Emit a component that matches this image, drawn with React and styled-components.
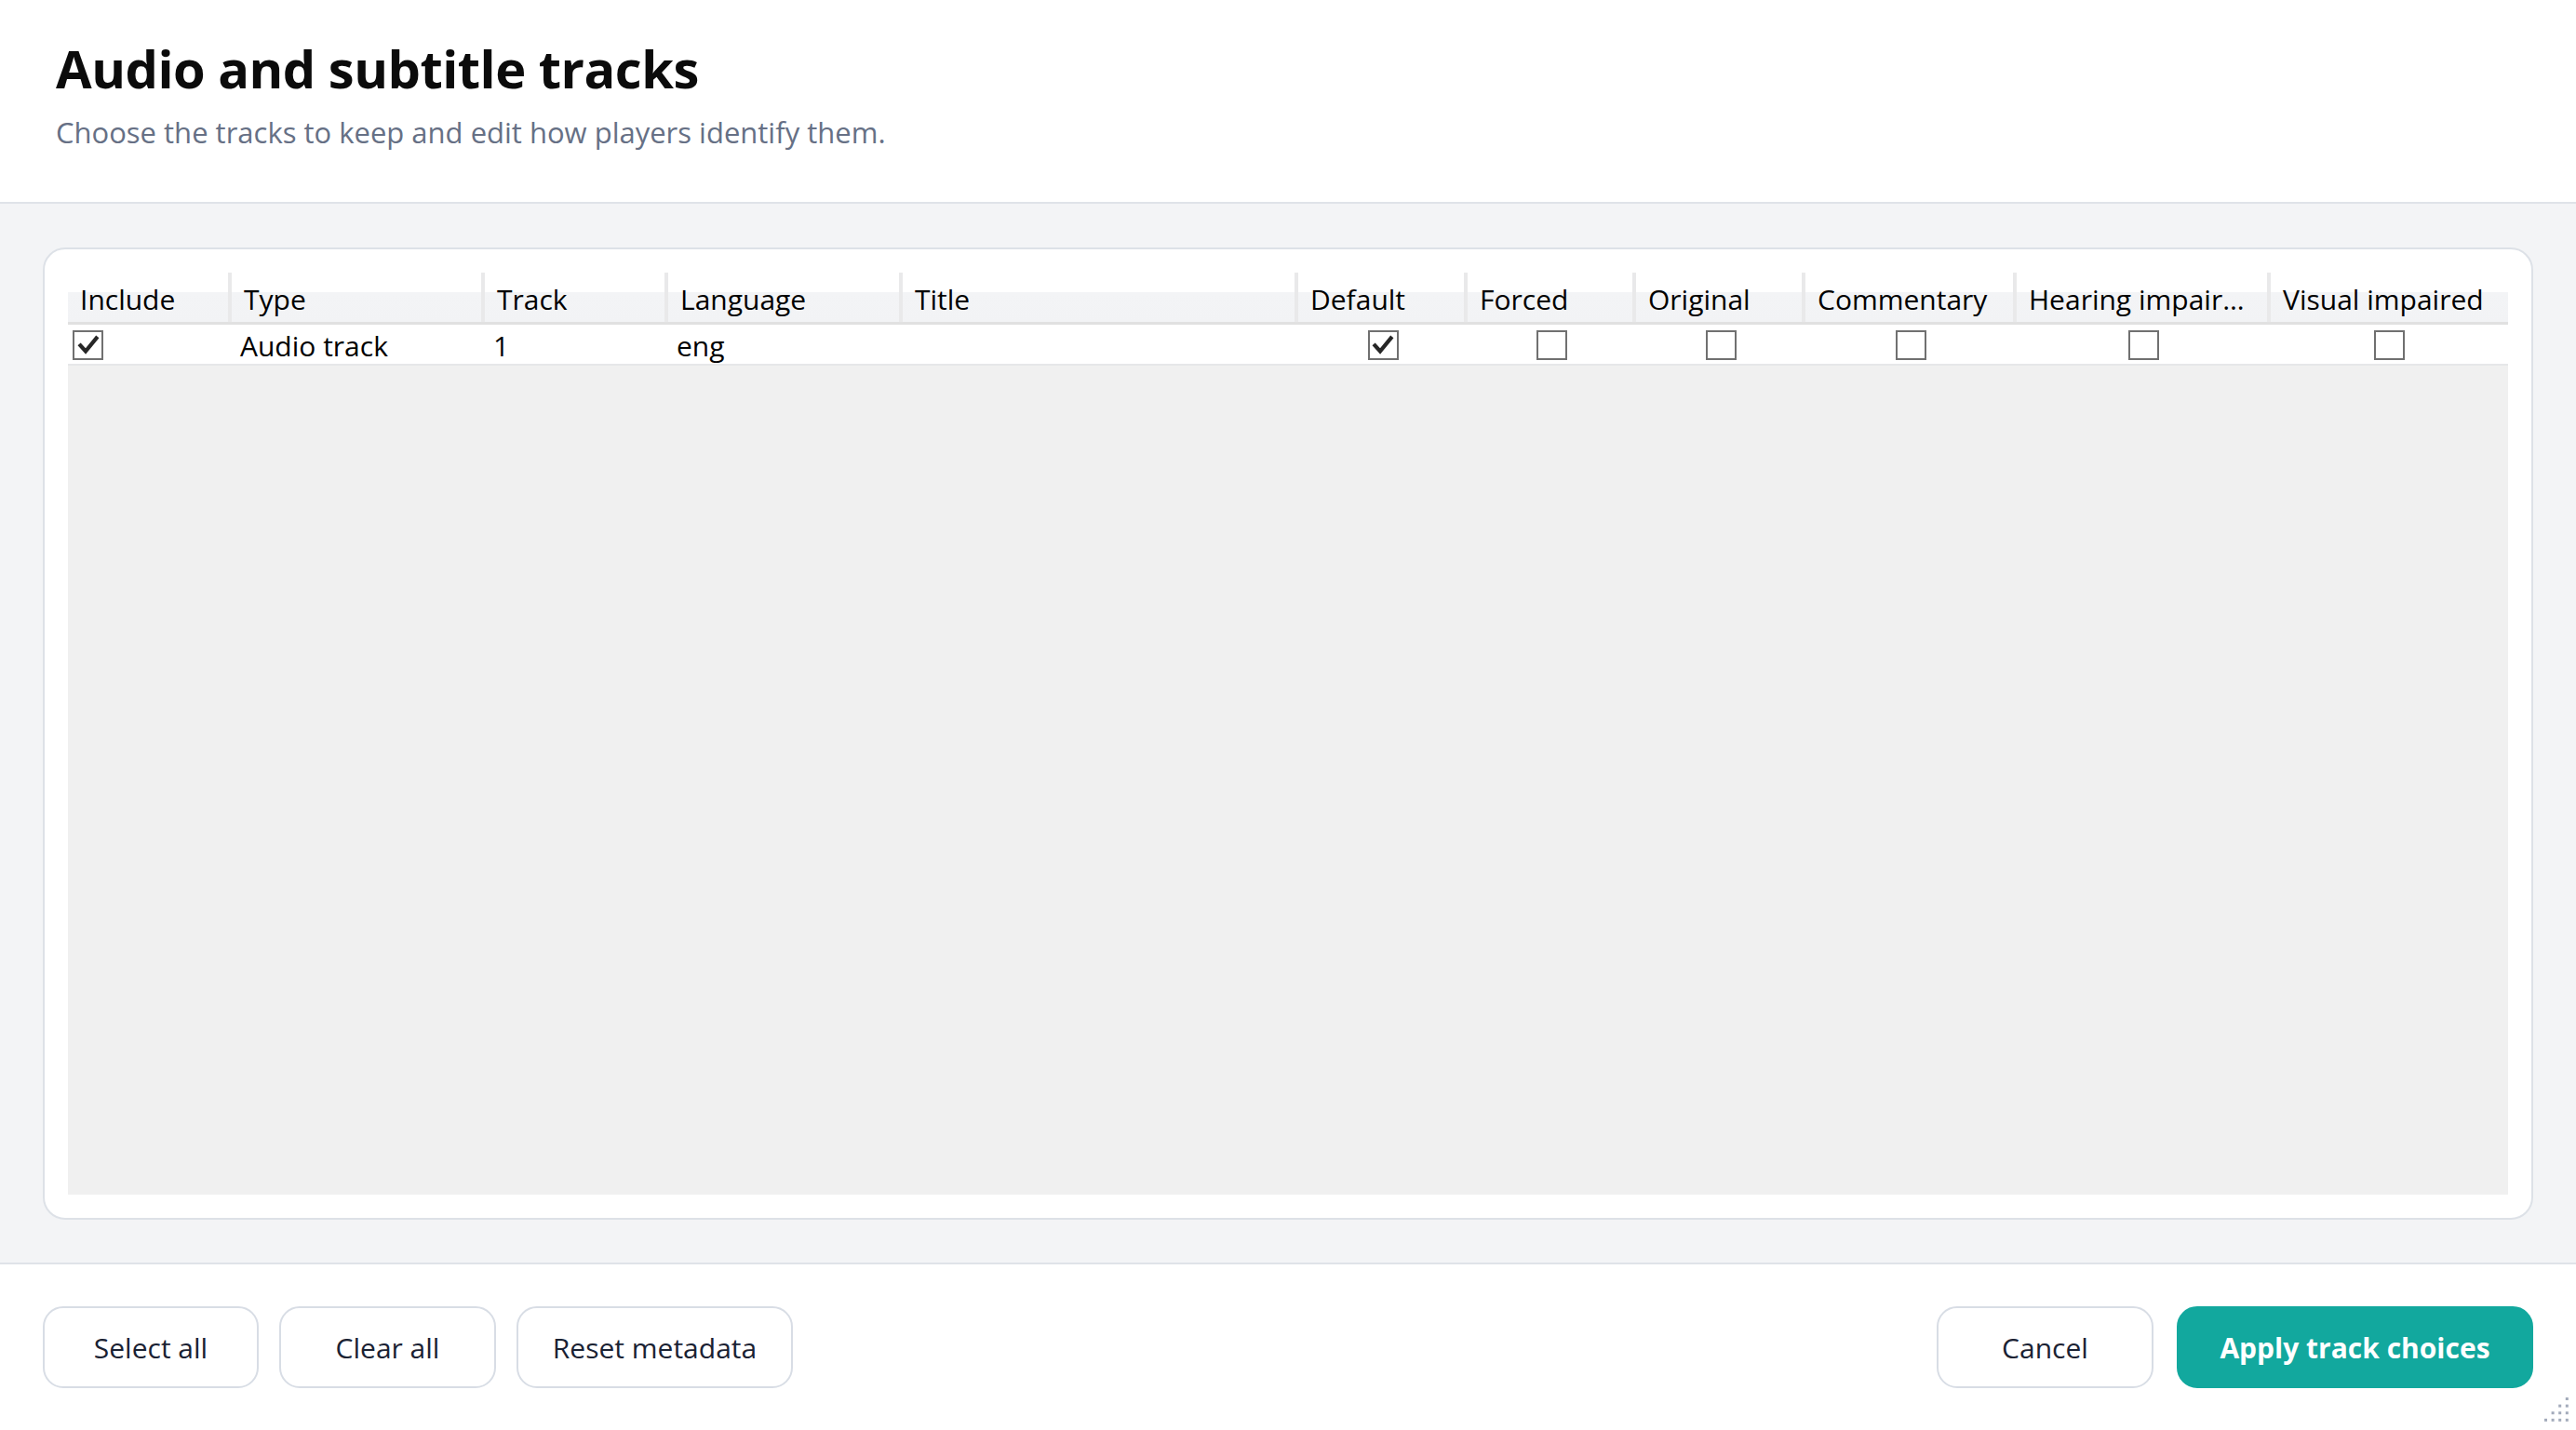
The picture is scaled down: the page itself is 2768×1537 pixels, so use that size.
import styled, { createGlobalStyle } from "styled-components";

const GlobalStyle = createGlobalStyle`
    html, body {
        margin: 0;
        padding: 0;
        background: #fff;
    }
    body {
        font-family: "Open Sans", "Noto Sans", sans-serif;
        color: #000;
    }
    * {
        box-sizing: border-box;
    }
`

const Page = styled.div`
    position: relative;
    height: 100vh;
    display: flex;
    flex-direction: column;
    overflow: hidden;
`

const Header = styled.div`
    height: 219px;
    flex-shrink: 0;
    padding: 35px 60px 0;
    border-bottom: 2px solid #dfe3e8;
    background: #fff;
`

const Title = styled.h1`
    margin: 0;
    font-size: 56px;
    line-height: 76px;
    font-weight: 700;
    color: #0b0b0b;
    letter-spacing: -0.5px;
`

const Subtitle = styled.p`
    margin: 11px 0 0;
    font-size: 31px;
    line-height: 40px;
    color: #667085;
`

const Content = styled.div`
    flex: 1;
    display: flex;
    padding: 47px 46px 46px;
    background: #f3f4f6;
    min-height: 0;
`

const Card = styled.div`
    flex: 1;
    display: flex;
    padding: 25px;
    background: #fff;
    border: 2px solid #dde1e7;
    border-radius: 24px;
`

const TableView = styled.div`
    flex: 1;
    display: flex;
    flex-direction: column;
    background: #f0f0f0;
`

const cols = "176px 272px 197px 252px 425px 182px 181px 182px 227px 273px 255px";

const HeaderRow = styled.div`
    display: grid;
    grid-template-columns: ${cols};
    height: 56px;
    background: linear-gradient(180deg, #fff 0%, #fff 40%, #f3f4f6 40%, #f2f3f5 100%);
    border-bottom: 3px solid #e1e1e1;
`

const HeaderCell = styled.div`
    display: flex;
    align-items: center;
    padding: 3px 0 0 13px;
    font-size: 30px;
    color: #000;
    white-space: nowrap;
    overflow: hidden;
    border-right: ${p => p.$last ? "none" : "4px solid #e9e9ea"};
`

const Row = styled.div`
    display: grid;
    grid-template-columns: ${cols};
    height: 44px;
    background: #fff;
    border-bottom: 2px solid #e6e7e9;
`

const Cell = styled.div`
    display: flex;
    align-items: center;
    justify-content: ${p => p.$center ? "center" : "flex-start"};
    padding: ${p => p.$center ? "0" : "2px 0 0 9px"};
    font-size: 30px;
    color: #000;
    white-space: nowrap;
`

const BoxCell = styled(Cell)`
    padding: 0 0 0 5px;
`

const Check = styled.div`
    width: 33px;
    height: 32px;
    border: 2px solid #707070;
    background: #fff;
    display: flex;
    align-items: center;
    justify-content: center;
    svg {
        display: block;
    }
`

const Footer = styled.div`
    height: 180px;
    flex-shrink: 0;
    display: flex;
    align-items: flex-start;
    justify-content: space-between;
    padding: 45px 46px 0;
    background: #fff;
    border-top: 2px solid #dfe3e8;
`

const BtnGroup = styled.div`
    display: flex;
    gap: ${p => p.$gap || 22}px;
`

const Btn = styled.div`
    height: 88px;
    width: ${p => p.$w}px;
    display: flex;
    align-items: center;
    justify-content: center;
    border-radius: 22px;
    border: 2px solid ${p => p.$primary ? "#12a89e" : "#d8dde5"};
    background: ${p => p.$primary ? "#12a89e" : "#fff"};
    color: ${p => p.$primary ? "#fff" : "#1a2233"};
    font-size: 30px;
    font-weight: ${p => p.$primary ? 700 : 400};
    cursor: pointer;
`

const Grip = styled.div`
    position: absolute;
    right: 4px;
    bottom: 5px;
    width: 30px;
    height: 30px;
`

const columns = ["Include", "Type", "Track", "Language", "Title", "Default", "Forced", "Original", "Commentary", "Hearing impair…", "Visual impaired"];

const track = {type: "Audio track", num: "1", lang: "eng", title: "", flags: [true, false, false, false, false, false]};

function CheckBox({checked}) {
    return <Check>
        {checked && <svg width="24" height="24" viewBox="0 0 24 24">
            <path d="M3.5 12.5 L9 18.5 L20.5 4.5" fill="none" stroke="#262626" strokeWidth="4.2" strokeLinecap="square" strokeLinejoin="miter"/>
        </svg>}
    </Check>
}

function ResizeGrip() {
    const dots = [];
    for (let r = 0; r < 4; r++) {
        for (let c = 3 - r; c < 4; c++) {
            dots.push(<rect key={r + "-" + c} x={c * 7.6} y={r * 7.6} width="3" height="3" fill="#a3abbb"/>);
        }
    }
    return <Grip>
        <svg width="30" height="30" viewBox="0 0 30 30">{dots}</svg>
    </Grip>
}

export default function App() {
    return <Page>
        <GlobalStyle/>
        <Header>
            <Title>Audio and subtitle tracks</Title>
            <Subtitle>Choose the tracks to keep and edit how players identify them.</Subtitle>
        </Header>
        <Content>
            <Card>
                <TableView>
                    <HeaderRow>
                        {columns.map((c, i) => <HeaderCell key={c} $last={i === columns.length - 1}>{c}</HeaderCell>)}
                    </HeaderRow>
                    <Row>
                        <BoxCell><CheckBox checked={true}/></BoxCell>
                        <Cell>{track.type}</Cell>
                        <Cell>{track.num}</Cell>
                        <Cell>{track.lang}</Cell>
                        <Cell>{track.title}</Cell>
                        {track.flags.map((f, i) => <Cell key={i} $center><CheckBox checked={f}/></Cell>)}
                    </Row>
                </TableView>
            </Card>
        </Content>
        <Footer>
            <BtnGroup>
                <Btn $w={232}>Select all</Btn>
                <Btn $w={233}>Clear all</Btn>
                <Btn $w={297}>Reset metadata</Btn>
            </BtnGroup>
            <BtnGroup $gap={25}>
                <Btn $w={233}>Cancel</Btn>
                <Btn $w={383} $primary>Apply track choices</Btn>
            </BtnGroup>
        </Footer>
        <ResizeGrip/>
    </Page>
}
